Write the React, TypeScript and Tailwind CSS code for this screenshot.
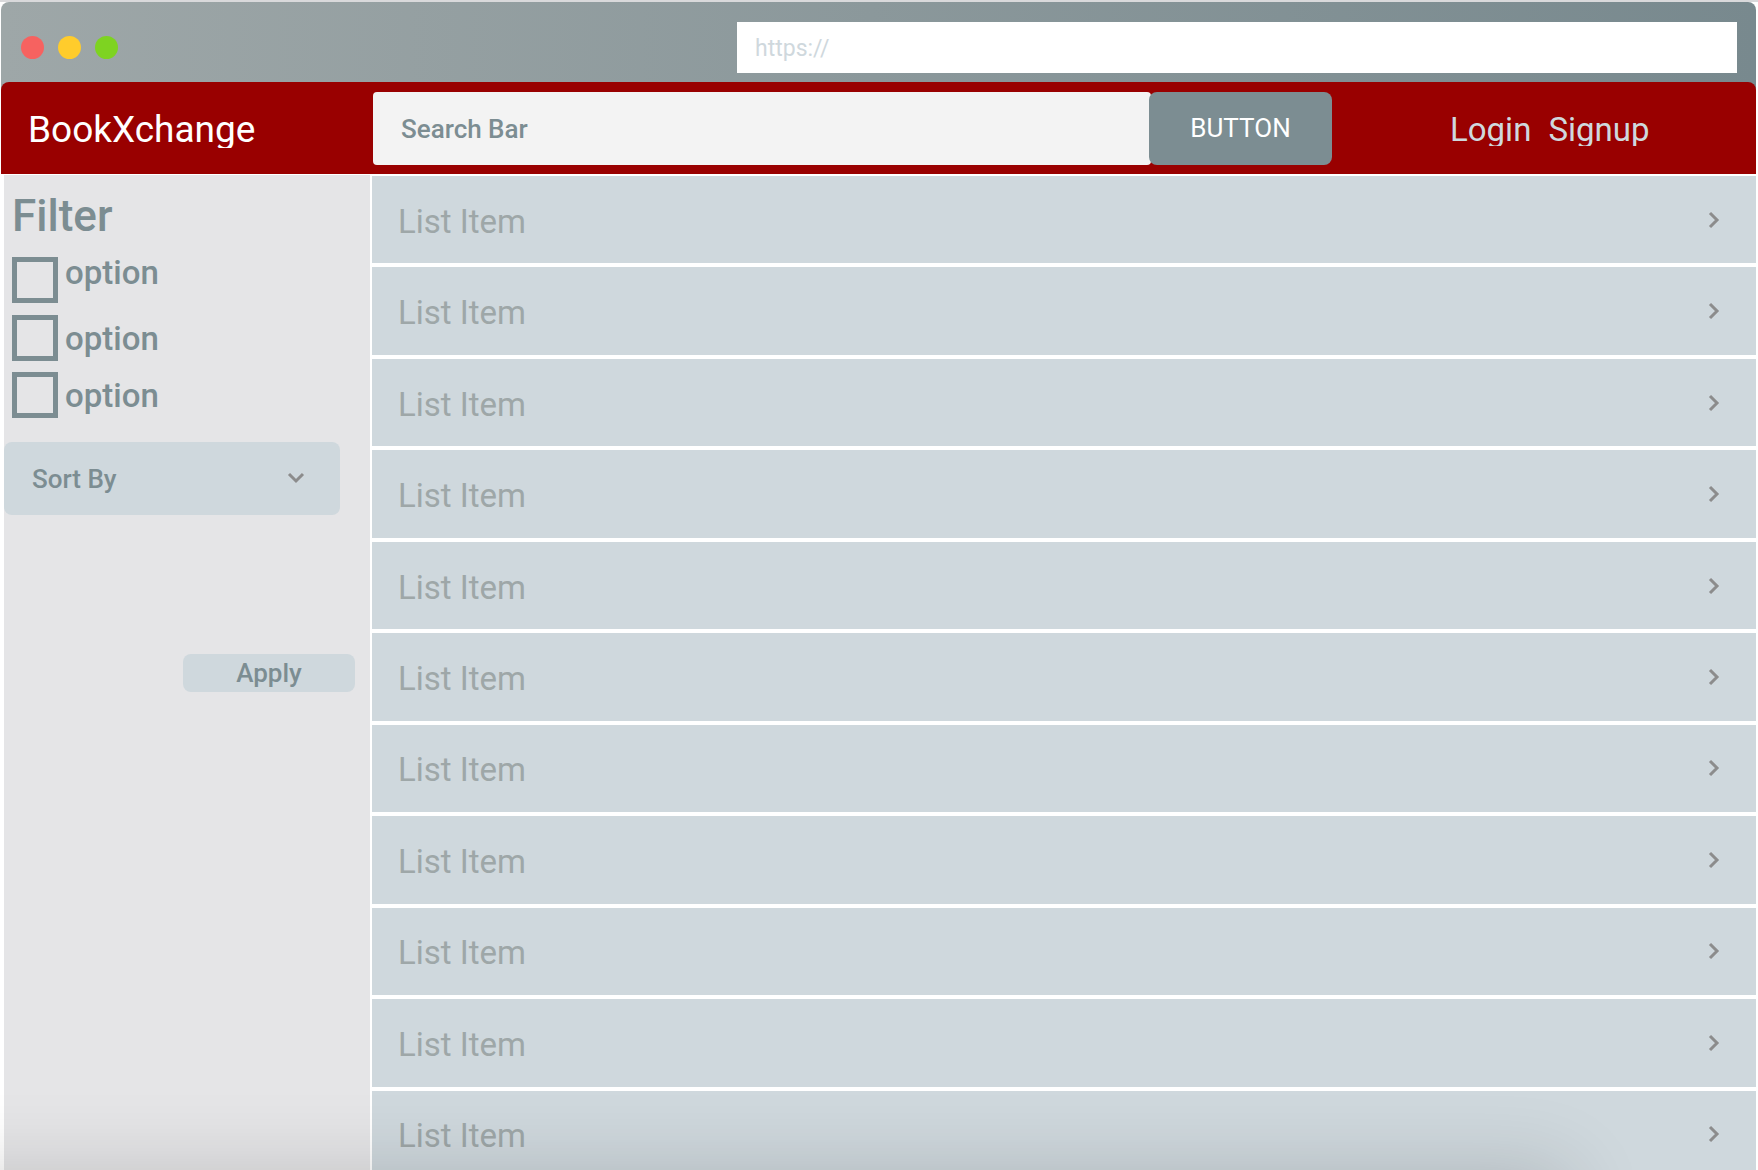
import React from "react";

const items = Array.from({ length: 11 }, (_, i) => i + 1);
const options = [1, 2, 3];

function ChevronRight() {
  return (
    <svg className="h-[18px] w-3 shrink-0" viewBox="0 0 12 18" fill="none" stroke="#8c8c8c" strokeWidth="3" aria-hidden="true">
      <path d="M2 2 L9 9 L2 16" />
    </svg>
  );
}

function BrowserBar() {
  return (
    <div className="flex h-[88px] shrink-0 items-start justify-between rounded-t-lg bg-linear-to-r from-[#9ea7a8] to-[#78898e] pt-5 pr-[19px] pl-5">
      <div className="flex gap-[14px] pt-[14px]">
        <span className="size-[23px] rounded-full bg-[#f66260]" />
        <span className="size-[23px] rounded-full bg-[#ffcc2c]" />
        <span className="size-[23px] rounded-full bg-[#7ed321]" />
      </div>
      <input
        type="text"
        aria-label="Address"
        placeholder="https://"
        className="h-[51px] w-[1000px] max-w-[60%] bg-white px-[18px] pt-[2px] text-[23px] text-[#7c8d92] outline-none placeholder:text-[#cfd8dd] placeholder:opacity-100"
      />
    </div>
  );
}

function Header() {
  return (
    <header className="-mt-2 flex h-[92px] shrink-0 items-start rounded-t-lg bg-[#990000] pt-[10px]">
      <div className="w-[372px] shrink-0 pt-4 pl-[27px]">
        <h1 className="h-10 overflow-hidden text-[37px] leading-[44px] text-white">BookXchange</h1>
      </div>
      <input
        type="search"
        aria-label="Search"
        placeholder="Search Bar"
        className="-mr-[2px] h-[73px] min-w-0 flex-1 rounded-sm bg-[#f3f3f3] px-7 text-[26px] font-medium text-[#7c8d92] outline-none placeholder:text-[#7c8d92] placeholder:opacity-100"
      />
      <button type="button" className="relative h-[73px] w-[183px] shrink-0 rounded-lg bg-[#7c8d92] text-[26px] text-white">
        BUTTON
      </button>
      <nav className="flex w-[424px] shrink-0 gap-[17px] pt-4 pl-[118px] text-[33px] leading-[44px] text-[#cfd8dd]">
        <a href="#login" className="h-[38px] overflow-hidden">Login</a>
        <a href="#signup" className="h-[38px] overflow-hidden">Signup</a>
      </nav>
    </header>
  );
}

function Sidebar() {
  return (
    <aside className="w-[366px] shrink-0 bg-[#e5e5e7] text-[#7c8d92]">
      <h2 className="pt-[14px] pl-2 text-[44px] leading-[54px] font-medium">Filter</h2>
      <div className="flex flex-col gap-[11px] pt-[14px] pl-2">
        {options.map((n) => (
          <label key={n} className="flex h-[46px] items-end gap-[7px] text-[33px] leading-[44px] font-medium first:mb-[1px] first:items-start first:leading-[32px]">
            <input type="checkbox" className="size-[46px] shrink-0 appearance-none border-[5px] border-[#7c8d92] checked:bg-[#7c8d92]" />
            option
          </label>
        ))}
      </div>
      <div className="relative mt-6 w-[336px]">
        <select aria-label="Sort By" className="h-[73px] w-full appearance-none rounded-lg bg-[#cfd8dd] pt-[2px] pl-7 text-[26px] font-medium outline-none">
          <option>Sort By</option>
        </select>
        <svg className="pointer-events-none absolute top-[30px] right-[35px] h-3 w-[18px]" viewBox="0 0 18 12" fill="none" stroke="#8c8c8c" strokeWidth="3" aria-hidden="true">
          <path d="M2 2 L9 9 L16 2" />
        </svg>
      </div>
      <button type="button" className="mt-[139px] mr-[15px] ml-auto block h-[38px] w-[172px] rounded-lg bg-[#cfd8dd] text-[26px] leading-[36px] font-medium">
        Apply
      </button>
    </aside>
  );
}

export default function App() {
  return (
    <div className="relative flex h-screen flex-col overflow-hidden border-t-2 border-[#d9d9db] bg-white pr-[2px] pl-px font-[Roboto,sans-serif]">
      <BrowserBar />
      <Header />
      <main className="flex min-h-0 flex-1 gap-[2px] pt-px pl-[3px]">
        <Sidebar />
        <ul className="grid min-h-[1003px] flex-1 auto-rows-fr gap-1 self-start pt-px">
          {items.map((n) => (
            <li key={n} className="flex">
              <a href={"#item-" + n} className="flex flex-1 items-center justify-between bg-[#cfd8dd] pr-9 pl-[26px]">
                <span className="pt-1 text-[33px] leading-[38px] text-[#9ea7a8]">List Item</span>
                <ChevronRight />
              </a>
            </li>
          ))}
        </ul>
      </main>
      <div className="pointer-events-none absolute top-full right-[190px] -left-[120px] h-40 shadow-[0_0_80px_rgba(0,0,0,0.16)]" />
    </div>
  );
}
